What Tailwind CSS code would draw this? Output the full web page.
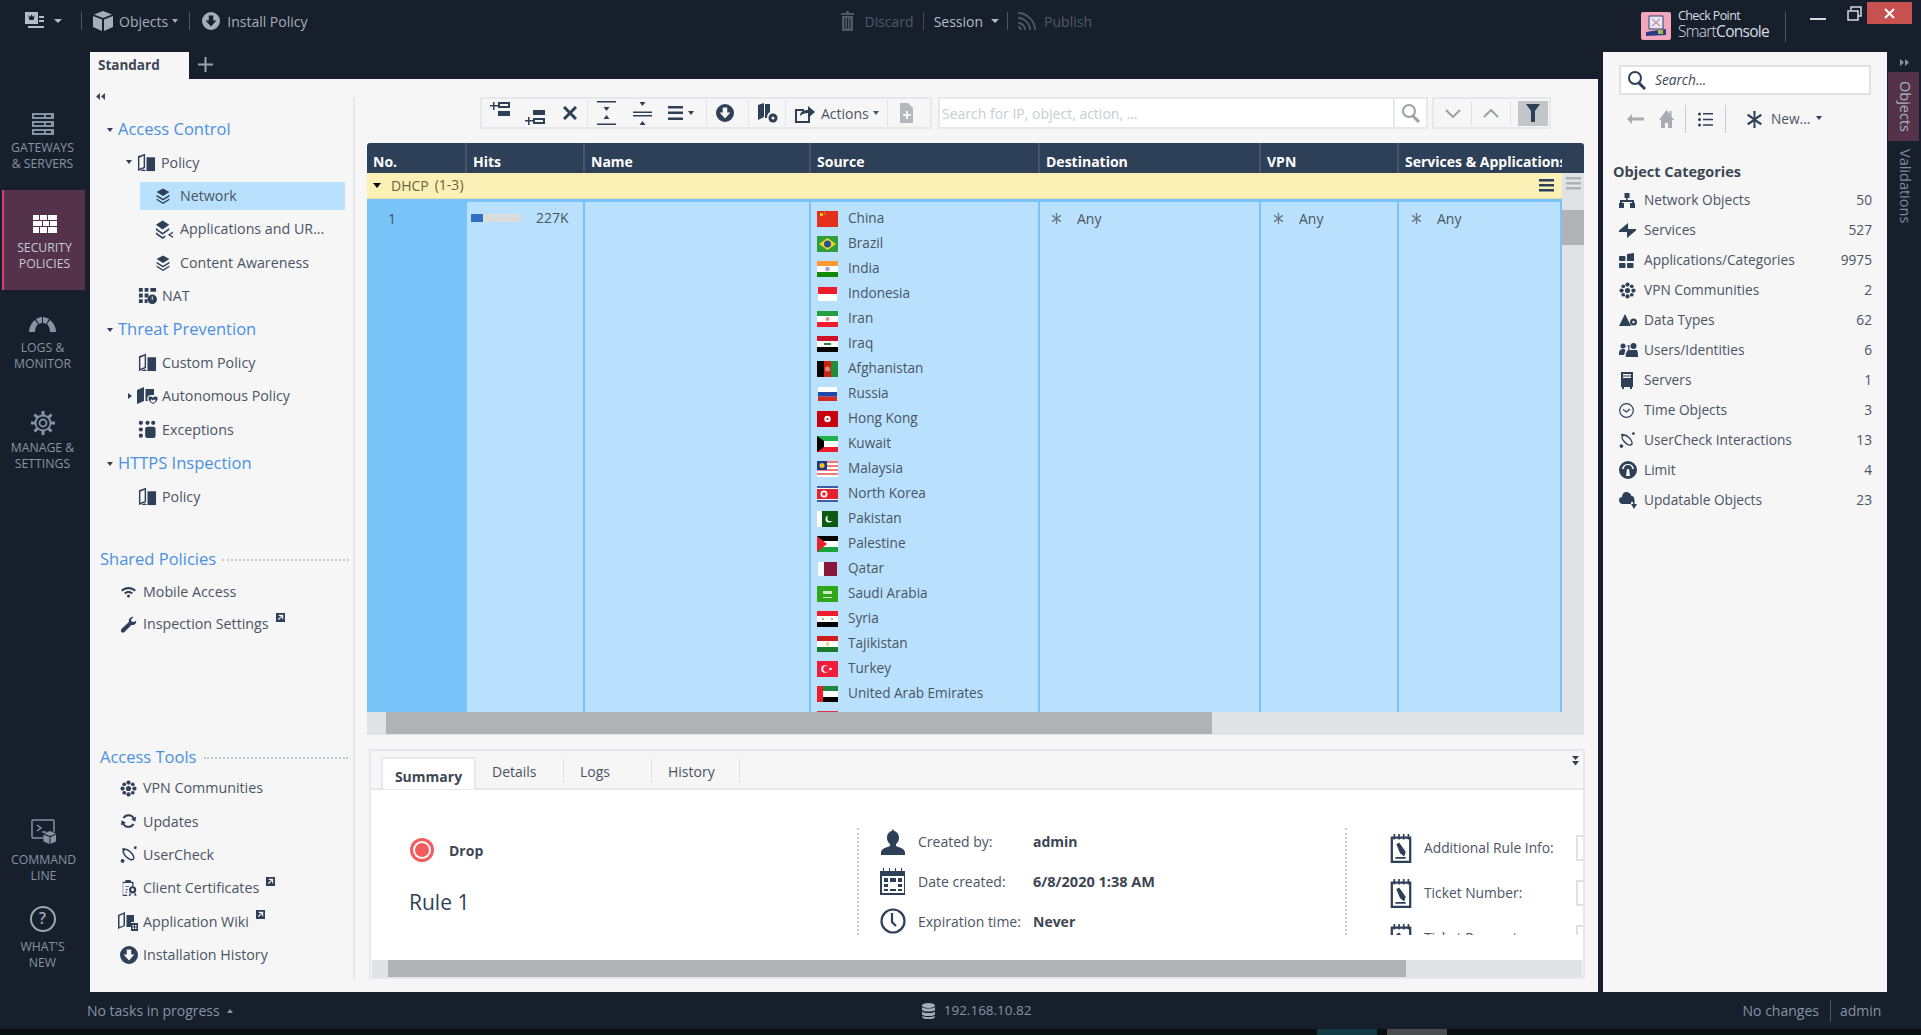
<!DOCTYPE html>
<html lang="en">
<head>
<meta charset="UTF-8">
<title>Check Point SmartConsole</title>
<script src="https://cdn.jsdelivr.net/npm/@tailwindcss/browser@4"></script>
</head>
<body class="w-[1921px] h-[1035px] overflow-hidden bg-[#171f2c] font-['Open_Sans',sans-serif] text-[14px] text-[#4a5463]">

<!-- icon set -->
<svg class="hidden">
  <symbol id="book" viewBox="0 0 20 20"><path d="M1 3.5 8.5.8v15L1 19zM2.500 5v11.500l4.500-1.800V3z" fill-rule="evenodd"/><path d="M10 4.500h9V19h-9z"/><path d="M7 17l3 2H3z"/></symbol>
  <symbol id="layers" viewBox="0 0 20 20"><path d="M10 .5l8 4.500-8 5-8-5z"/><path d="M2 8.500l8 5 8-5v2l-8 5-8-5z"/><path d="M2 13l8 5 8-5v2l-8 5-8-5z"/></symbol>
  <symbol id="layershare" viewBox="0 0 20 20"><path d="M8 .5l7 4.500-7 5-7-5z"/><path d="M1 8.500l7 5 7-5v2l-7 5-7-5z"/><path d="M1 13l7 5 3-2v2l-3 2-7-5z"/><path d="M19 12v1.600l-3 1.900 3 1.900V19l-5.500-3.500z"/></symbol>
  <symbol id="grid" viewBox="0 0 20 20"><path d="M1 2h4v4H1zM7 2h4v4H7zM13 2h6v4h-6zM1 8h4v4H1zM7 8h4v4H7zM1 14h4v4H1zM7 14h3v4H7z"/><circle cx="15" cy="14" r="5"/><path d="M14.500 11h1v3.500h-1z" fill="#f6f6f7"/></symbol>
  <symbol id="dots" viewBox="0 0 20 20"><circle cx="3" cy="3" r="2.200"/><circle cx="10" cy="3" r="2.200"/><circle cx="16" cy="3" r="2.200"/><circle cx="3" cy="10" r="2.200"/><circle cx="3" cy="16.500" r="2.200"/><rect x="7.500" y="7" width="11" height="12" rx="2.500"/></symbol>
  <symbol id="wifi" viewBox="0 0 20 20"><path d="M0 8c5.500-5.500 14.500-5.500 20 0l-2 2c-4.500-4-11.500-4-16 0z"/><path d="M4 11.500c3.500-3 8.500-3 12 0l-2 2c-2.500-2-5.500-2-8 0z"/><circle cx="10" cy="16" r="2"/></symbol>
  <symbol id="wrench" viewBox="0 0 20 20"><path d="M19 5.500c.6 3-2 6-5.500 5L5 19c-1 1-3 .6-3.600-.5S1 16 2 15l8.500-8C9.500 3.500 13 .5 16 1l-3 3 .5 2.500L16 7z"/></symbol>
  <symbol id="snow" viewBox="0 0 20 20"><circle cx="10" cy="10" r="3"/><circle cx="10" cy="3" r="2.500"/><circle cx="10" cy="17" r="2.500"/><circle cx="3" cy="10" r="2.500"/><circle cx="17" cy="10" r="2.500"/><circle cx="5" cy="5" r="2.200"/><circle cx="15" cy="5" r="2.200"/><circle cx="5" cy="15" r="2.200"/><circle cx="15" cy="15" r="2.200"/></symbol>
  <symbol id="refresh" viewBox="0 0 20 20"><path d="M10 2a8 8 0 0 1 7 4l2-1-1 6-5-3 2-1a5.500 5.500 0 0 0-9.500 0L3 6a8 8 0 0 1 7-4zM10 18a8 8 0 0 1-7-4l-2 1 1-6 5 3-2 1a5.500 5.500 0 0 0 9.500 0L17 14a8 8 0 0 1-7 4z"/></symbol>
  <symbol id="usercheck" viewBox="0 0 20 20"><ellipse cx="10" cy="10" rx="8" ry="3.800" transform="rotate(45 10 10)" fill="none" stroke="currentColor" stroke-width="1.800"/><path d="M2 3.500 4 2l3 2-1.500 1.500z"/><circle cx="18" cy="2" r="1.700"/><circle cx="3" cy="17.500" r="2.300"/></symbol>
  <symbol id="cert" viewBox="0 0 20 20"><path d="M3 3h3V1h6v2h3v5h-1.500V4.500h-10v13H8V19H3z"/><path d="M6 8h4v1H6zM6 11h3v1H6zM6 14h2v1H6z"/><circle cx="14" cy="12" r="4"/><circle cx="14" cy="12" r="1.600" fill="#f6f6f7"/><path d="M11 15l-1.500 4 3-1zM17 15l1.500 4-3-1z"/></symbol>
  <symbol id="bookgrid" viewBox="0 0 20 20"><path d="M0 4 7 1v14l-7 3zM1.500 5v11l4-1.500V3z" fill-rule="evenodd"/><path d="M8.500 4H16v7h-3v5H8.500z"/><path d="M13 12h7v8h-7z"/><path d="M14.500 14h1.500v1.500h-1.500zM17 14h1.500v1.500H17zM14.500 16.500h1.500V18h-1.500zM17 16.500h1.500V18H17z" fill="#f6f6f7"/></symbol>
  <symbol id="install" viewBox="0 0 20 20"><path fill-rule="evenodd" d="M10 0a10 10 0 1 0 0 20 10 10 0 0 0 0-20zM7.500 4h5v5.500H16L10 16 4 9.500h3.500z"/></symbol>
  <symbol id="ext" viewBox="0 0 10 10"><path fill-rule="evenodd" d="M0 0h10v10H0zM3 2v1.200h2.800L2.200 6.800l1 1L6.800 4.200V7H8V2z"/></symbol>
  <symbol id="star" viewBox="0 0 12 12"><path d="M5.200 0h1.600l-.2 4.500L10.400 2l.8 1.400-4 2.600 4 2.600-.8 1.400-3.800-2.500.2 4.500H5.200l.2-4.500L1.600 10 .8 8.600l4-2.600-4-2.600L1.600 2l3.800 2.500z"/></symbol>
  <symbol id="gridnote" viewBox="0 0 22 32"><path d="M1.200 5h19.600v25.800H1.200z" fill="none" stroke="currentColor" stroke-width="2.400"/><path d="M3 1h1.800v6H3zM8 1h1.800v6H8zM13 1h1.800v6H13zM18 1h1.800v6H18z"/><path d="M6 12l3-2 7 10-1.500 5-4.500-3.500zM5 25.500h11v2H5z"/></symbol>
</svg>

<!-- title bar -->
<header class="h-[52px] pb-[10px] flex items-center text-[14px] text-[#a4aeb9]">
  <div class="w-[81px] flex items-center">
    <svg class="ml-[24px] w-[21px] h-[20px] text-[#b4bdc7]" viewBox="0 0 21 20" fill="currentColor"><path fill-rule="evenodd" d="M1 1h13v12H1zM4 4l1.500 5h4L11 4 9 6 7.500 3.500 6 6z"/><path d="M15 5h5v2h-5zM15 9h5v2h-5zM4 15h16v2H4z"/></svg>
    <span class="ml-[9px] w-0 h-0 border-x-[4px] border-x-transparent border-t-[4px] border-t-[#b4bdc7]"></span>
  </div>
  <span class="w-px h-[18px] bg-[#4a5563]"></span>
  <svg class="ml-[11px] w-[20px] h-[20px] text-[#a4aeb9]" viewBox="0 0 20 20" fill="currentColor"><path d="M10 0l9 3.500-9 3.500L1 3.500z"/><path d="M0 5l9 3.500V20L0 16z"/><path d="M20 5l-9 3.500V20l9-4z"/></svg>
  <span class="ml-[6px]">Objects</span>
  <span class="ml-[4px] w-0 h-0 border-x-[3px] border-x-transparent border-t-[4px] border-t-[#a4aeb9]"></span>
  <span class="ml-[11px] w-px h-[18px] bg-[#4a5563]"></span>
  <svg class="ml-[12px] w-[18px] h-[18px] text-[#a4aeb9]" fill="currentColor"><use href="#install"/></svg>
  <span class="ml-[7px]">Install Policy</span>

  <div class="ml-[533px] flex items-center">
    <svg class="w-[13px] h-[20px] text-[#4f5966]" viewBox="0 0 13 20" fill="currentColor"><path d="M5 0h3v2h5v2H0V2h5zM1 5h11v15H1zM3.500 7v11h1V7zM6 7v11h1V7zM8.500 7v11h1V7z" fill-rule="evenodd"/></svg>
    <span class="ml-[11px] text-[#4f5966]">Discard</span>
    <span class="ml-[9px] w-px h-[18px] bg-[#3f4957]"></span>
    <span class="ml-[10px] text-[#b4bcc6]">Session</span>
    <span class="ml-[8px] w-0 h-0 border-x-[4px] border-x-transparent border-t-[4px] border-t-[#b4bcc6]"></span>
    <span class="ml-[8px] w-px h-[18px] bg-[#4a5563]"></span>
    <svg class="ml-[9px] w-[20px] h-[20px] text-[#4f5966]" viewBox="0 0 20 20" fill="none" stroke="currentColor" stroke-width="1.800"><path d="M1 2c9 0 17 8 17 17M1 7c6.500 0 12 5.500 12 12M1 12c4 0 7 3 7 7"/><path d="M1 16c1.500 0 3 1.500 3 3"/></svg>
    <span class="ml-[7px] text-[#4f5966]">Publish</span>
  </div>

  <div class="ml-[549px] mt-[10px] w-[30px] h-[28px] rounded-[2px] bg-[#f3a7bc] flex items-center justify-center">
    <svg class="w-[24px] h-[24px]" viewBox="0 0 24 24"><path d="M5 2h14v13H5z" fill="#e6e6f0" stroke="#33407a"/><path d="M8 5l8 7M16 5l-8 7" stroke="#c55a80"/><path d="M2 18l20-3v6l-20 1z" fill="#2c3a8c"/><path d="M14 16h5v4h-5z" fill="#a5c23c"/></svg>
  </div>
  <div class="ml-[7px] mt-[6px] w-[107px] flex flex-col text-[#d8dde3]">
    <span class="h-[14px] leading-[14px] text-[12.5px] tracking-[-0.6px]">Check Point</span>
    <span class="h-[16px] leading-[16px] text-[15.500px] tracking-[-0.7px]"><span class="font-light">Smart</span>Console</span>
  </div>
  <span class="mt-[12px] w-px h-[30px] bg-[#4a5563]"></span>
  <span class="ml-[24px] w-[16px] h-[2px] bg-[#d5dae0] mt-[-4px]"></span>
  <svg class="ml-[21px] w-[15px] h-[15px] mt-[-16px] text-[#d5dae0]" viewBox="0 0 15 15" fill="none" stroke="currentColor" stroke-width="1.500"><path d="M4 4V1h10v9h-3"/><path d="M1 5h10v9H1z"/></svg>
  <div class="ml-[5px] w-[45px] h-[22px] mt-[-16px] bg-[#c75050] flex items-center justify-center text-white">
    <svg class="w-[11px] h-[11px]" viewBox="0 0 11 11" stroke="currentColor" stroke-width="2"><path d="M1 1l9 9M10 1l-9 9"/></svg>
  </div>
</header>

<main class="h-[940px] flex">

  <!-- left rail -->
  <nav class="w-[90px] pt-[38px] pb-[3px] flex flex-col text-[12.250px] leading-[15.5px] text-[#8593a3] text-center">
    <div class="h-[100px] w-[83px] ml-[1px] pb-[19px] flex flex-col items-center justify-end">
      <svg class="w-[22px] h-[22px] mb-[5px]" viewBox="0 0 22 22" fill="currentColor"><path fill-rule="evenodd" d="M0 0h22v6H0zM2 2v2h10V2zM14 2v2h5V2zM0 8h22v6H0zM2 10v2h10v-2zM14 10v2h5v-2zM0 16h22v6H0zM2 18v2h10v-2zM14 18v2h5v-2z"/></svg>
      <span>GATEWAYS</span><span>&amp; SERVERS</span>
    </div>
    <div class="h-[100px] w-[83px] ml-[2px] pb-[19px] flex flex-col items-center justify-end bg-[#53324a] border-l-2 border-[#d0456f] text-[#c3cad3]">
      <svg class="w-[24px] h-[18px] mb-[7px]" viewBox="0 0 24 18" fill="#fff"><path d="M0 0h6v5H0zM7 0h7v5H7zM15 0h9v5h-9zM0 6h9v5H0zM10 6h6v5h-6zM17 6h7v5h-7zM0 12h6v6H0zM7 12h7v6H7zM15 12h9v6h-9z"/></svg>
      <span>SECURITY</span><span>POLICIES</span>
    </div>
    <div class="h-[100px] w-[83px] ml-[1px] pb-[19px] flex flex-col items-center justify-end">
      <svg class="w-[27px] h-[15px] mb-[8px]" viewBox="0 0 27 15" fill="currentColor"><path d="M0 15C0 11 2 6 6 3l3 4c-2 2-3 5-3 8zM7 2c2-1 4-2 6-2v6c-1 0-2 .5-3 1zM14 0c2 0 4 1 6 2l-3 5c-1-.5-2-1-3-1zM21 3c4 3 6 8 6 12h-6c0-3-1-6-3-8z"/></svg>
      <span>LOGS &amp;</span><span>MONITOR</span>
    </div>
    <div class="h-[100px] w-[83px] ml-[1px] pb-[19px] flex flex-col items-center justify-end">
      <svg class="w-[24px] h-[24px] mb-[5px]" viewBox="0 0 24 24" fill="none" stroke="currentColor" stroke-width="1.800"><circle cx="12" cy="12" r="7.500"/><circle cx="12" cy="12" r="3.500"/><path stroke-width="3" d="M12 0v4M12 20v4M0 12h4M20 12h4M3.500 3.500l3 3M17.500 17.500l3 3M3.500 20.500l3-3M17.500 6.500l3-3"/></svg>
      <span>MANAGE &amp;</span><span>SETTINGS</span>
    </div>
    <div class="mt-auto h-[87px] w-[83px] ml-[2px] pb-[19px] flex flex-col items-center justify-end">
      <svg class="w-[25px] h-[25px] mb-[8px]" viewBox="0 0 25 25" fill="none" stroke="currentColor" stroke-width="1.500"><path d="M13 19H2a1 1 0 0 1-1-1V2a1 1 0 0 1 1-1h20a1 1 0 0 1 1 1v11"/><path d="M6 6l4 3-4 3M11 13h4"/><path fill="currentColor" stroke="none" d="M19 12l6 2.500-6 2.500-6-2.500zM12.500 15.500l6 2.500v7l-6-2.500zM25 15.500L19.500 18v7l5.500-2.500z"/></svg>
      <span>COMMAND</span><span>LINE</span>
    </div>
    <div class="h-[87px] w-[83px] ml-[1px] pb-[19px] flex flex-col items-center justify-end">
      <div class="w-[26px] h-[26px] mb-[7px] rounded-full border-2 border-[#9aa6b3] flex items-center justify-center text-[16px] text-[#9aa6b3] font-semibold">?</div>
      <span>WHAT'S</span><span>NEW</span>
    </div>
  </nav>

  <!-- centre -->
  <div class="w-[1508px] flex flex-col">
    <div class="h-[27px] flex">
      <div class="w-[99px] bg-[#f6f6f7] pl-[8px] flex items-center font-bold text-[13.500px] text-[#3d4653]">Standard</div>
      <svg class="ml-[9px] mt-[5px] w-[15px] h-[15px] text-[#9aa4b0]" viewBox="0 0 15 15" fill="currentColor"><path d="M6.500 0h2v6.500H15v2H8.500V15h-2V8.500H0v-2h6.500z"/></svg>
    </div>
    <div class="h-[913px] bg-[#f6f6f7] flex">

      <!-- policy tree -->
      <aside class="w-[263px] flex flex-col text-[14.250px]">
        <div class="h-[33px] pl-[6px] flex items-center">
          <svg class="w-[9px] h-[7px] mt-[1px] text-[#3d4a5c]" viewBox="0 0 9 7" fill="currentColor"><path d="M4 0v7L0 3.500zM9 0v7L5 3.500z"/></svg>
        </div>
        <div class="mt-[0.300px] h-[33.400px] pl-[17px] flex items-center"><span class="w-0 h-0 border-x-[3.500px] border-x-transparent border-t-[4px] border-t-[#2e3f58] mt-[2px]"></span><span class="ml-[5px] text-[16.500px] text-[#4a90e2]">Access Control</span></div>
        <div class="h-[33.400px] pl-[36px] flex items-center"><span class="w-0 h-0 border-x-[3.500px] border-x-transparent border-t-[4px] border-t-[#2e3f58]"></span><svg class="ml-[5px] w-[19px] h-[19px] text-[#2e3f58]" fill="currentColor"><use href="#book"/></svg><span class="ml-[5px]">Policy</span></div>
        <div class="h-[33.400px] pl-[50px] flex items-center"><div class="w-[205px] h-[28px] bg-[#b9e1fd] pl-[15px] flex items-center"><svg class="w-[16px] h-[18px] text-[#2e3f58]" fill="currentColor"><use href="#layers"/></svg><span class="ml-[9px]">Network</span></div></div>
        <div class="h-[33.400px] pl-[65px] flex items-center"><svg class="w-[19px] h-[19px] text-[#2e3f58]" fill="currentColor"><use href="#layershare"/></svg><span class="ml-[6px]">Applications and UR...</span></div>
        <div class="h-[33.400px] pl-[65px] flex items-center"><svg class="w-[16px] h-[18px] text-[#2e3f58]" fill="currentColor"><use href="#layers"/></svg><span class="ml-[9px]">Content Awareness</span></div>
        <div class="h-[33.400px] pl-[48px] flex items-center"><svg class="w-[19px] h-[19px] text-[#2e3f58]" fill="currentColor"><use href="#grid"/></svg><span class="ml-[5px]">NAT</span></div>
        <div class="h-[33.400px] pl-[17px] flex items-center"><span class="w-0 h-0 border-x-[3.500px] border-x-transparent border-t-[4px] border-t-[#2e3f58] mt-[2px]"></span><span class="ml-[5px] text-[16.500px] text-[#4a90e2]">Threat Prevention</span></div>
        <div class="h-[33.400px] pl-[48px] flex items-center"><svg class="w-[19px] h-[19px] text-[#2e3f58]" fill="currentColor"><use href="#book"/></svg><span class="ml-[5px]">Custom Policy</span></div>
        <div class="h-[33.400px] pl-[38px] flex items-center"><span class="w-0 h-0 border-y-[3.500px] border-y-transparent border-l-[4px] border-l-[#2e3f58]"></span><svg class="ml-[5px] w-[21px] h-[19px] text-[#2e3f58]" fill="currentColor" viewBox="0 0 21 19"><path d="M0 3l7-3v14l-7 3z"/><path d="M8.500 2H17v6h-3c-3 0-5 3-3 6H8.500z"/><path d="M16 11c1-2 4-2 4.500 0s-1 4-4.500 6c-3.500-2-5-4-4.500-6S15 9 16 11zM16 13.500c-1-1.500-2.500-1-2.500 0s1 1.500 2.500 2.500c1.500-1 2.500-1.500 2.500-2.500s-1.500-1.500-2.500 0z" fill-rule="evenodd"/></svg><span class="ml-[4px]">Autonomous Policy</span></div>
        <div class="h-[33.400px] pl-[48px] flex items-center"><svg class="w-[19px] h-[19px] text-[#2e3f58]" fill="currentColor"><use href="#dots"/></svg><span class="ml-[5px]">Exceptions</span></div>
        <div class="h-[33.400px] pl-[17px] flex items-center"><span class="w-0 h-0 border-x-[3.500px] border-x-transparent border-t-[4px] border-t-[#2e3f58] mt-[2px]"></span><span class="ml-[5px] text-[16.500px] text-[#4a90e2]">HTTPS Inspection</span></div>
        <div class="h-[33.400px] pl-[48px] flex items-center"><svg class="w-[19px] h-[19px] text-[#2e3f58]" fill="currentColor"><use href="#book"/></svg><span class="ml-[5px]">Policy</span></div>

        <div class="mt-[30px] h-[33.400px] pl-[10px] pr-[4px] flex items-center"><span class="text-[16.500px] text-[#4a90e2]">Shared Policies</span><span class="ml-[6px] flex-1 border-t-2 border-dotted border-[#c3c9d0]"></span></div>
        <div class="h-[31px] pl-[29px] flex items-center"><svg class="w-[19px] h-[15px] text-[#2e3f58]" fill="currentColor"><use href="#wifi"/></svg><span class="ml-[5px]">Mobile Access</span></div>
        <div class="h-[33.400px] pl-[30px] flex items-center"><svg class="w-[17px] h-[17px] text-[#2e3f58]" fill="currentColor"><use href="#wrench"/></svg><span class="ml-[6px]">Inspection Settings</span><svg class="ml-[7px] mb-[14px] w-[9px] h-[9px] text-[#2e3f58]" fill="currentColor"><use href="#ext"/></svg></div>

        <div class="mt-[100.400px] h-[33.400px] pl-[10px] pr-[5px] flex items-center"><span class="text-[16.500px] text-[#4a90e2]">Access Tools</span><span class="ml-[7px] flex-1 border-t-2 border-dotted border-[#c3c9d0]"></span></div>
        <div class="h-[30px] pb-[3px] pl-[30px] flex items-center"><svg class="w-[17px] h-[17px] text-[#2e3f58]" fill="currentColor"><use href="#snow"/></svg><span class="ml-[6px]">VPN Communities</span></div>
        <div class="h-[33.400px] pl-[30px] flex items-center"><svg class="w-[17px] h-[18px] text-[#2e3f58]" fill="currentColor"><use href="#refresh"/></svg><span class="ml-[6px]">Updates</span></div>
        <div class="h-[33.400px] pl-[30px] flex items-center"><svg class="w-[17px] h-[17px] text-[#2e3f58]" fill="currentColor"><use href="#usercheck"/></svg><span class="ml-[6px]">UserCheck</span></div>
        <div class="h-[33.400px] pl-[30px] flex items-center"><svg class="w-[18px] h-[18px] text-[#2e3f58]" fill="currentColor"><use href="#cert"/></svg><span class="ml-[5px]">Client Certificates</span><svg class="ml-[7px] mb-[14px] w-[9px] h-[9px] text-[#2e3f58]" fill="currentColor"><use href="#ext"/></svg></div>
        <div class="h-[33.400px] pl-[28px] flex items-center"><svg class="w-[20px] h-[20px] text-[#2e3f58]" fill="currentColor"><use href="#bookgrid"/></svg><span class="ml-[5px]">Application Wiki</span><svg class="ml-[7px] mb-[14px] w-[9px] h-[9px] text-[#2e3f58]" fill="currentColor"><use href="#ext"/></svg></div>
        <div class="h-[33.400px] pl-[30px] flex items-center"><svg class="w-[18px] h-[18px] text-[#2e3f58]" fill="currentColor"><use href="#install"/></svg><span class="ml-[5px]">Installation History</span></div>
      </aside>
      <div class="w-[2px] h-[883px] mt-[18px] bg-[#e5e7ea]"></div>

      <!-- rulebase -->
      <section class="w-[1243px] pt-[18px] text-[14.5px]">
        <div class="h-[32px] ml-[125px] flex">
          <div class="w-[452px] border-2 border-[#e6e8ec] flex items-center text-[#2e3f58]">
            <div class="w-[35px] flex justify-center"><svg class="w-[20px] h-[16px] mt-[-8px]" viewBox="0 0 20 16" fill="currentColor"><path d="M0 4h3V1h1.500v3H8v1.500H4.500V9H3V5.500H0z"/><path fill-rule="evenodd" d="M8 1h12v6H8zM10 3v2h8V3z"/><path d="M8 10h12v5H8z"/></svg></div>
            <div class="w-[35px] flex justify-center"><svg class="w-[20px] h-[16px] mt-[8px]" viewBox="0 0 20 16" fill="currentColor"><path d="M8 1h12v5H8z"/><path fill-rule="evenodd" d="M8 9h12v6H8zM10 11v2h8v-2z"/><path d="M0 11h3V8h1.500v3H8v1.500H4.500V16H3v-3.500H0z"/></svg></div>
            <div class="w-[35px] flex justify-center"><svg class="w-[14px] h-[14px]" viewBox="0 0 14 14" stroke="currentColor" stroke-width="3"><path d="M1 1l12 12M13 1L1 13"/></svg></div>
            <span class="w-px h-[26px] bg-[#e1e3e6]"></span>
            <div class="w-[36px] flex justify-center"><svg class="w-[19px] h-[24px]" viewBox="0 0 19 24" fill="currentColor"><path d="M0 0h19v1.500H0zM0 22.500h19V24H0zM6.500 6h6l-3 4zM6.500 18h6l-3-4z"/></svg></div>
            <div class="w-[36px] flex justify-center"><svg class="w-[19px] h-[24px]" viewBox="0 0 19 24" fill="currentColor"><path d="M0 10.500h19V12H0zM0 14h19v1.500H0zM6.500 1h6l-3 4zM6.500 24h6l-3-4z"/></svg></div>
            <div class="w-[46px] pl-[8px] flex items-center"><svg class="w-[15px] h-[14px]" viewBox="0 0 15 14" fill="currentColor"><path d="M0 0h15v2.500H0zM0 5.500h15V8H0zM0 11.500h15V14H0z"/></svg><span class="ml-[5px] w-0 h-0 border-x-[3.500px] border-x-transparent border-t-[4px] border-t-[#2e3f58]"></span></div>
            <span class="w-px h-[26px] bg-[#e1e3e6]"></span>
            <div class="w-[41px] pl-[9px]"><svg class="w-[18px] h-[18px]" fill="currentColor"><use href="#install"/></svg></div>
            <span class="w-px h-[26px] bg-[#e1e3e6]"></span>
            <div class="w-[36px] pl-[9px]"><svg class="w-[20px] h-[20px]" viewBox="0 0 20 20" fill="currentColor"><path d="M0 2l6-2v14l-6 3z"/><path d="M7 1h5v8c-2 1-3 3-3 6H7z"/><circle cx="15" cy="15" r="4.500"/><circle cx="15" cy="15" r="1.500" fill="#f6f6f7"/></svg></div>
            <span class="w-px h-[26px] bg-[#e1e3e6]"></span>
            <div class="w-[101px] pl-[9px] flex items-center text-[#4a5463]"><svg class="w-[20px] h-[19px] text-[#2e3f58]" viewBox="0 0 20 19" fill="currentColor"><path d="M0 5h9v2H2v10h11v-6h2v8H0z"/><path d="M5 12c0-4 3-6 8-6V2l7 6-7 6V9c-3 0-6 1-8 3z"/></svg><span class="ml-[6px] text-[14px]">Actions</span><span class="ml-[4px] w-0 h-0 border-x-[3px] border-x-transparent border-t-[4px] border-t-[#4a5463]"></span></div>
            <span class="w-px h-[26px] bg-[#e1e3e6]"></span>
            <div class="flex-1 pl-[12px]"><svg class="w-[13px] h-[20px] text-[#b4b8bd]" viewBox="0 0 13 20" fill="currentColor"><path d="M0 0h8l5 5v15H0zM6 8v3H3v2h3v3h2v-3h3v-2H8V8z" fill-rule="evenodd"/></svg></div>
          </div>
          <div class="ml-[6px] w-[490px] border-2 border-[#e6e8ec] bg-white flex">
            <span class="w-[455px] pl-[2px] flex items-center text-[14px] text-[#c8ccd1] border-r-2 border-[#e6e8ec]">Search for IP, object, action, ...</span>
            <div class="flex-1 flex items-center justify-center"><svg class="w-[19px] h-[20px] text-[#9aa0a7]" viewBox="0 0 19 20" fill="none" stroke="currentColor" stroke-width="2"><circle cx="8" cy="8" r="6"/><path stroke-width="3" d="M12 13l6 6"/></svg></div>
          </div>
          <div class="ml-[4px] w-[119px] border-2 border-[#e6e8ec] flex items-center">
            <div class="w-[37px] flex justify-center"><svg class="w-[16px] h-[9px] text-[#9aa0a7]" viewBox="0 0 16 9" fill="none" stroke="currentColor" stroke-width="2"><path d="M1 1l7 7 7-7"/></svg></div>
            <span class="w-px h-[24px] bg-[#dfe1e4]"></span>
            <div class="w-[38px] flex justify-center"><svg class="w-[16px] h-[9px] text-[#9aa0a7]" viewBox="0 0 16 9" fill="none" stroke="currentColor" stroke-width="2"><path d="M1 8l7-7 7 7"/></svg></div>
            <span class="w-px h-[24px] bg-[#dfe1e4]"></span>
            <div class="ml-[7px] w-[30px] h-[25px] bg-[#c3c6c9] flex items-center justify-center"><svg class="w-[14px] h-[18px] text-[#2e3f58]" viewBox="0 0 14 18" fill="currentColor"><path d="M0 0h14l-5 7v11H5V7z"/></svg></div>
          </div>
        </div>

        <div class="ml-[12px] mt-[14px] w-[1217px]">
          <div class="h-[30px] grid grid-cols-[100px_118px_226px_229px_221px_138px_163px_22px] bg-[#2e3f58] rounded-t-[3px] text-white font-bold text-[14px]">
            <div class="pl-[6px] pt-[9px] leading-[20px] border-r-2 border-[#45566e]">No.</div>
            <div class="pl-[6px] pt-[9px] leading-[20px] border-r-2 border-[#45566e]">Hits</div>
            <div class="pl-[6px] pt-[9px] leading-[20px] border-r-2 border-[#45566e]">Name</div>
            <div class="pl-[6px] pt-[9px] leading-[20px] border-r-2 border-[#45566e]">Source</div>
            <div class="pl-[6px] pt-[9px] leading-[20px] border-r-2 border-[#45566e]">Destination</div>
            <div class="pl-[6px] pt-[9px] leading-[20px] border-r-2 border-[#45566e]">VPN</div>
            <div class="pl-[6px] pt-[9px] leading-[20px] overflow-hidden whitespace-nowrap">Services &amp; Applications</div>
            <div></div>
          </div>
          <div class="h-[539px] flex">
            <div class="w-[1195px] flex flex-col">
              <div class="h-[26px] bg-[#fbf0b5] pl-[6px] flex items-center text-[14px] text-[#6b6340] border-b border-[#e8dea4]">
                <span class="w-0 h-0 border-x-[4.500px] border-x-transparent border-t-[5px] border-t-black"></span>
                <span class="ml-[10px]">DHCP</span><span class="ml-[6px] mt-[-2px]">(1-3)</span>
                <svg class="ml-auto mr-[8px] w-[15px] h-[13px] text-[#2e3f58]" viewBox="0 0 15 13" fill="currentColor"><path d="M0 0h15v2.500H0zM0 5h15v2.500H0zM0 10h15v2.500H0z"/></svg>
              </div>
              <div class="h-[3px] bg-[#78c3f7]"></div>
              <div class="h-[510px] grid grid-cols-[100px_118px_226px_229px_221px_138px_163px] overflow-hidden text-[14px]">
                <div class="bg-[#78c3f7] pl-[21px] pt-[7px] leading-[20px]">1</div>
                <div class="bg-[#b9e1fd] border-r-2 border-[#78c3f7] pl-[4px] pt-[6px] flex items-start">
                  <span class="mt-[6px] flex w-[50px] h-[8px] bg-[#dcdcdc]"><span class="w-[12px] bg-[#2f6fc4]"></span></span>
                  <span class="ml-[15px] leading-[20px]">227K</span>
                </div>
                <div class="bg-[#b9e1fd] border-r-2 border-[#78c3f7]"></div>
                <ul class="bg-[#b9e1fd] border-r-2 border-[#78c3f7] pl-[6px] pt-[4px] h-[510px] overflow-hidden text-[13.600px]">
                  <li class="h-[25px] flex items-center"><svg class="w-[21px] h-[16px]" viewBox="0 0 21 16"><path fill="#e3301a" d="M0 0h21v16H0z"/><path fill="#f5c518" d="M3 2h3v3H3zM7 1h1v1H7zM8 3h1v1H8z"/></svg><span class="ml-[10px]">China</span></li>
                  <li class="h-[25px] flex items-center"><svg class="w-[21px] h-[16px]" viewBox="0 0 21 16"><path fill="#2f9e3c" d="M0 0h21v16H0z"/><path fill="#f0d81f" d="M10.500 2 19 8l-8.500 6L2 8z"/><circle cx="10.500" cy="8" r="3.500" fill="#2b4f9e"/></svg><span class="ml-[10px]">Brazil</span></li>
                  <li class="h-[25px] flex items-center"><svg class="w-[21px] h-[16px]" viewBox="0 0 21 16"><path fill="#ff9a33" d="M0 0h21v5H0z"/><path fill="#fff" d="M0 5h21v6H0z"/><path fill="#138808" d="M0 11h21v5H0z"/><circle cx="10.500" cy="8" r="2.200" fill="#9aa3d0"/></svg><span class="ml-[10px]">India</span></li>
                  <li class="h-[25px] flex items-center"><svg class="w-[21px] h-[16px]" viewBox="0 0 21 16"><path fill="#f01c2e" d="M1 1h19v7H1z"/><path fill="#fff" d="M1 8h19v7H1z"/></svg><span class="ml-[10px]">Indonesia</span></li>
                  <li class="h-[25px] flex items-center"><svg class="w-[21px] h-[16px]" viewBox="0 0 21 16"><path fill="#239f40" d="M0 0h21v5H0z"/><path fill="#fff" d="M0 5h21v6H0z"/><path fill="#f01c2e" d="M0 11h21v5H0z"/><circle cx="10.500" cy="8" r="2" fill="#e98a94"/></svg><span class="ml-[10px]">Iran</span></li>
                  <li class="h-[25px] flex items-center"><svg class="w-[21px] h-[16px]" viewBox="0 0 21 16"><path fill="#ce1126" d="M0 0h21v5H0z"/><path fill="#fff" d="M0 5h21v6H0z"/><path d="M0 11h21v5H0z"/><path fill="#2a8a3a" d="M7 7h7v2H7z"/></svg><span class="ml-[10px]">Iraq</span></li>
                  <li class="h-[25px] flex items-center"><svg class="w-[21px] h-[16px]" viewBox="0 0 21 16"><path d="M0 0h7v16H0z"/><path fill="#d32011" d="M7 0h7v16H7z"/><path fill="#1f8f3a" d="M14 0h7v16h-7z"/><circle cx="10.500" cy="8" r="2.500" fill="#e08a7e"/></svg><span class="ml-[10px]">Afghanistan</span></li>
                  <li class="h-[25px] flex items-center"><svg class="w-[21px] h-[16px]" viewBox="0 0 21 16"><path fill="#fff" d="M1 1h19v5H1z"/><path fill="#1f47a8" d="M1 6h19v4.500H1z"/><path fill="#d52b1e" d="M1 10.500h19V15H1z"/></svg><span class="ml-[10px]">Russia</span></li>
                  <li class="h-[25px] flex items-center"><svg class="w-[21px] h-[16px]" viewBox="0 0 21 16"><path fill="#c8010f" d="M0 0h21v16H0z"/><circle cx="10.500" cy="8" r="3.200" fill="#fff"/><circle cx="10.500" cy="8" r="1" fill="#c8010f"/></svg><span class="ml-[10px]">Hong Kong</span></li>
                  <li class="h-[25px] flex items-center"><svg class="w-[21px] h-[16px]" viewBox="0 0 21 16"><path fill="#1fb24a" d="M0 0h21v5H0z"/><path fill="#fff" d="M0 5h21v6H0z"/><path fill="#f01c2e" d="M0 11h21v5H0z"/><path d="M0 0l7 5v6l-7 5z"/></svg><span class="ml-[10px]">Kuwait</span></li>
                  <li class="h-[25px] flex items-center"><svg class="w-[21px] h-[16px]" viewBox="0 0 21 16"><path fill="#fff" d="M0 0h21v16H0z"/><path fill="#f07a7a" d="M0 0h21v2H0zM0 4h21v2H0zM0 8h21v2H0zM0 12h21v2H0z"/><path fill="#1c3a8e" d="M0 0h10v9H0z"/><circle cx="5" cy="4.500" r="2.500" fill="#f5c518"/></svg><span class="ml-[10px]">Malaysia</span></li>
                  <li class="h-[25px] flex items-center"><svg class="w-[21px] h-[16px]" viewBox="0 0 21 16"><path fill="#3e5da8" d="M0 0h21v16H0z"/><path fill="#fff" d="M0 2h21v12H0z"/><path fill="#e3222c" d="M0 3h21v10H0z"/><circle cx="7" cy="8" r="3.500" fill="#fff"/><circle cx="7" cy="8" r="1.800" fill="#e3222c"/></svg><span class="ml-[10px]">North Korea</span></li>
                  <li class="h-[25px] flex items-center"><svg class="w-[21px] h-[16px]" viewBox="0 0 21 16"><path fill="#fff" d="M0 0h5v16H0z"/><path fill="#0c5a12" d="M5 0h16v16H5z"/><circle cx="12" cy="8" r="3.500" fill="#fff"/><circle cx="13.500" cy="7" r="3.200" fill="#0c5a12"/></svg><span class="ml-[10px]">Pakistan</span></li>
                  <li class="h-[25px] flex items-center"><svg class="w-[21px] h-[16px]" viewBox="0 0 21 16"><path d="M0 0h21v5H0z"/><path fill="#fff" d="M0 5h21v6H0z"/><path fill="#1aa33a" d="M0 11h21v5H0z"/><path fill="#e8202e" d="M0 0l10 8-10 8z"/></svg><span class="ml-[10px]">Palestine</span></li>
                  <li class="h-[25px] flex items-center"><svg class="w-[21px] h-[16px]" viewBox="0 0 21 16"><path fill="#fff" d="M1 1h6v14H1z"/><path fill="#8a1538" d="M7 1h13v14H7z"/></svg><span class="ml-[10px]">Qatar</span></li>
                  <li class="h-[25px] flex items-center"><svg class="w-[21px] h-[16px]" viewBox="0 0 21 16"><path fill="#2ea81a" d="M0 0h21v16H0z"/><path fill="#cfe9c4" d="M6 5h9v3H6zM6 11h9v1H6z"/></svg><span class="ml-[10px]">Saudi Arabia</span></li>
                  <li class="h-[25px] flex items-center"><svg class="w-[21px] h-[16px]" viewBox="0 0 21 16"><path fill="#f01c2e" d="M0 0h21v5H0z"/><path fill="#fff" d="M0 5h21v6H0z"/><path d="M0 11h21v5H0z"/><path fill="#7fd07f" d="M5 7h2v2H5zM14 7h2v2h-2z"/></svg><span class="ml-[10px]">Syria</span></li>
                  <li class="h-[25px] flex items-center"><svg class="w-[21px] h-[16px]" viewBox="0 0 21 16"><path fill="#d11a1a" d="M0 0h21v5H0z"/><path fill="#fff" d="M0 5h21v6H0z"/><path fill="#1a7a2e" d="M0 11h21v5H0z"/><path fill="#e8d68a" d="M9 6h3v4H9z"/></svg><span class="ml-[10px]">Tajikistan</span></li>
                  <li class="h-[25px] flex items-center"><svg class="w-[21px] h-[16px]" viewBox="0 0 21 16"><path fill="#f01c3c" d="M0 0h21v16H0z"/><circle cx="8" cy="8" r="3.800" fill="#fff"/><circle cx="9.200" cy="8" r="3" fill="#f01c3c"/><circle cx="13.500" cy="8" r="1.300" fill="#fff"/></svg><span class="ml-[10px]">Turkey</span></li>
                  <li class="h-[25px] flex items-center"><svg class="w-[21px] h-[16px]" viewBox="0 0 21 16"><path fill="#f01c2e" d="M0 0h6v16H0z"/><path fill="#1a8a3a" d="M6 0h15v5H6z"/><path fill="#fff" d="M6 5h15v6H6z"/><path d="M6 11h15v5H6z"/></svg><span class="ml-[10px]">United Arab Emirates</span></li>
                  <li class="h-[25px] flex items-center"><svg class="w-[21px] h-[16px]" viewBox="0 0 21 16"><path fill="#e3304a" d="M0 0h21v16H0z"/></svg></li>
                </ul>
                <div class="bg-[#b9e1fd] border-r-2 border-[#78c3f7] pl-[11px] pt-[7px] flex items-start leading-[20px]"><svg class="w-[11px] h-[11px] mt-[4px] text-[#6f7782]" fill="currentColor"><use href="#star"/></svg><span class="ml-[15px]">Any</span></div>
                <div class="bg-[#b9e1fd] border-r-2 border-[#78c3f7] pl-[12px] pt-[7px] flex items-start leading-[20px]"><svg class="w-[11px] h-[11px] mt-[4px] text-[#6f7782]" fill="currentColor"><use href="#star"/></svg><span class="ml-[15px]">Any</span></div>
                <div class="bg-[#b9e1fd] border-r-2 border-[#78c3f7] pl-[12px] pt-[7px] flex items-start leading-[20px]"><svg class="w-[11px] h-[11px] mt-[4px] text-[#6f7782]" fill="currentColor"><use href="#star"/></svg><span class="ml-[15px]">Any</span></div>
              </div>
            </div>
            <div class="w-[22px] bg-[#e0e2e6] flex flex-col items-center">
              <svg class="mt-[4px] w-[15px] h-[13px] text-[#b0b3b5]" viewBox="0 0 15 13" fill="currentColor"><path d="M0 0h15v2.500H0zM0 5h15v2.500H0zM0 10h15v2.500H0z"/></svg>
              <div class="mt-[20px] w-[22px] h-[35px] bg-[#b0b3b5]"></div>
            </div>
          </div>
          <div class="h-[23px] bg-[#e0e2e6] pl-[19px]"><div class="w-[826px] h-[22px] bg-[#b0b3b5]"></div></div>
        </div>

        <!-- rule details -->
        <div class="ml-[14px] mt-[14px] w-[1216px] h-[230px] border-2 border-[#e6e8ec] flex flex-col">
          <div class="h-[39px] border-b-2 border-[#e6e8ec] flex text-[14px]">
            <div class="ml-[10px] mt-[6px] w-[95px] h-[32px] bg-white border-x-2 border-t-2 border-[#e6e8ec] flex items-center justify-center font-bold text-[#3d4653] pt-[4px]">Summary</div>
            <div class="w-[88px] pl-[16px] mt-[8px] h-[24px] flex items-center border-r border-[#dfe1e4]">Details</div>
            <div class="w-[88px] pl-[16px] mt-[8px] h-[24px] flex items-center border-r border-[#dfe1e4]">Logs</div>
            <div class="w-[88px] pl-[16px] mt-[8px] h-[24px] flex items-center border-r border-[#dfe1e4]">History</div>
            <svg class="ml-auto mr-[4px] mt-[5px] w-[7px] h-[10px] text-[#2e3f58]" viewBox="0 0 7 10" fill="currentColor"><path d="M0 0h7L3.500 4zM0 5h7L3.500 9.500z"/></svg>
          </div>
          <div class="h-[170px] bg-white pt-[38px] flex text-[14px]">
            <div class="w-[488px] h-[107px] border-r-2 border-dotted border-[#c3c9d0] pl-[38px]">
              <div class="h-[44px] flex items-center">
                <svg class="w-[26px] h-[26px]" viewBox="0 0 26 26"><circle cx="13" cy="13" r="12" fill="#f25c5c"/><circle cx="13" cy="13" r="9" fill="#fff"/><circle cx="13" cy="13" r="7" fill="#f25c5c"/></svg>
                <span class="ml-[14px] font-bold text-[#3d4653]">Drop</span>
              </div>
              <p class="mt-[16px] text-[21px] leading-[28px] text-[#2e3f58]">Rule 1</p>
            </div>
            <div class="w-[488px] h-[107px] border-r-2 border-dotted border-[#c3c9d0] pl-[21px] flex flex-col gap-[12px] text-[14px]">
              <div class="h-[28px] flex items-center">
                <svg class="w-[26px] h-[26px] text-[#2e3f58]" viewBox="0 0 26 26" fill="currentColor"><path d="M13 0c-1 1-1 1-1 2-3 .5-5 3-5 7 0 3 1.500 5 3 6v2c-3 1.500-8 2-9 6v3h24v-3c-1-4-6-4.500-9-6v-2c1.500-1 3-3 3-6 0-4-2-6.500-5-7z"/></svg>
                <span class="ml-[12px] w-[115px]">Created by:</span><b class="font-bold text-[#3d4653]">admin</b>
              </div>
              <div class="h-[28px] flex items-center">
                <svg class="w-[26px] h-[27px] text-[#2e3f58]" viewBox="0 0 26 27" fill="currentColor"><path fill-rule="evenodd" d="M0 3h3V0h1v3h5V0h1v3h5V0h1v3h5V0h1v3h3v24H0zM2 8v17h22V8zM4 10h4v4H4zM10 10h6v4h-6zM18 10h4v4h-4zM4 16h4v3H4zM18 16h4v3h-4zM4 21h4v2H4zM10 21h6v2h-6zM18 21h4v2h-4z"/></svg>
                <span class="ml-[12px] w-[115px]">Date created:</span><b class="font-bold text-[14.500px] text-[#3d4653]">6/8/2020 1:38 AM</b>
              </div>
              <div class="h-[28px] flex items-center">
                <svg class="w-[26px] h-[26px] text-[#2e3f58]" viewBox="0 0 26 26" fill="none" stroke="currentColor" stroke-width="2.200"><circle cx="13" cy="13" r="11.500"/><path d="M12 5v9l4 4"/></svg>
                <span class="ml-[12px] w-[115px]">Expiration time:</span><b class="font-bold text-[#3d4653]">Never</b>
              </div>
            </div>
            <div class="flex-1 h-[107px] overflow-hidden pl-[43px] pt-[5px] flex flex-col gap-[15px]">
              <div class="h-[30px] shrink-0 flex items-center"><svg class="w-[22px] h-[30px] text-[#2e3f58]" fill="currentColor"><use href="#gridnote"/></svg><span class="ml-[12px] w-[152px] text-[13.800px]">Additional Rule Info:</span><span class="w-[7px] h-[26px] border-y-2 border-l-2 border-[#dfe1e4]"></span></div>
              <div class="h-[30px] shrink-0 flex items-center"><svg class="w-[22px] h-[30px] text-[#2e3f58]" fill="currentColor"><use href="#gridnote"/></svg><span class="ml-[12px] w-[152px] text-[13.800px]">Ticket Number:</span><span class="w-[7px] h-[26px] border-y-2 border-l-2 border-[#dfe1e4]"></span></div>
              <div class="h-[30px] shrink-0 flex items-center"><svg class="w-[22px] h-[30px] text-[#2e3f58]" fill="currentColor"><use href="#gridnote"/></svg><span class="ml-[12px] w-[152px] text-[13.800px]">Ticket Requester:</span><span class="w-[7px] h-[26px] border-y-2 border-l-2 border-[#dfe1e4]"></span></div>
            </div>
          </div>
          <div class="h-[17px] bg-[#e0e2e6] mx-[1px] pl-[16px]"><div class="w-[1018px] h-[17px] bg-[#b0b3b5]"></div></div>
        </div>
      </section>
    </div>
  </div>

  <!-- objects panel -->
  <aside class="ml-[5px] w-[284px] bg-[#f6f6f7] text-[13.700px]">
    <div class="ml-[16px] mt-[13px] w-[252px] h-[30px] border-2 border-[#dfe1e4] bg-white flex items-center pl-[6px]">
      <svg class="w-[19px] h-[20px] text-[#2e3f58]" viewBox="0 0 19 20" fill="none" stroke="currentColor" stroke-width="2"><circle cx="8" cy="8" r="6"/><path stroke-width="3" d="M12 13l6 6"/></svg>
      <span class="ml-[9px] italic text-[#3d4653]">Search...</span>
    </div>
    <div class="mt-[10px] h-[28px] ml-[24px] flex items-center">
      <svg class="w-[17px] h-[10px] text-[#a8adb3]" viewBox="0 0 17 10" fill="currentColor"><path d="M5 0v3.500h12v3H5V10L0 5z"/></svg>
      <svg class="ml-[15px] w-[15px] h-[18px] text-[#a8adb3]" viewBox="0 0 15 18" fill="currentColor"><path d="M7.500 0l3 4V1h2v5.500l2.500 3.500H13v8H9v-5H6v5H2v-8H0z"/></svg>
      <span class="ml-[11px] w-px h-[28px] bg-[#c8ccd1]"></span>
      <svg class="ml-[12px] w-[15px] h-[15px] text-[#2e3f58]" viewBox="0 0 15 15" fill="currentColor"><circle cx="1.500" cy="2" r="1.500"/><circle cx="1.500" cy="7.500" r="1.500"/><circle cx="1.500" cy="13" r="1.500"/><path d="M5 1h10v1.500H5zM5 6.800h10v1.500H5zM5 12.300h10v1.500H5z"/></svg>
      <span class="ml-[12px] w-px h-[28px] bg-[#c8ccd1]"></span>
      <svg class="ml-[20px] w-[17px] h-[17px] text-[#2e3f58]" viewBox="0 0 12 12" fill="currentColor"><use href="#star"/></svg>
      <span class="ml-[8px]">New...</span>
      <span class="ml-[6px] mb-[2px] w-0 h-0 border-x-[3.500px] border-x-transparent border-t-[4px] border-t-[#2e3f58]"></span>
    </div>
    <h3 class="mt-[29px] ml-[10px] h-[20px] leading-[20px] font-bold text-[14.500px] text-[#3d4653]">Object Categories</h3>
    <ul class="mt-[3px] pl-[16px] pr-[15px]">
      <li class="h-[30px] flex items-center"><span class="w-[25px]"><svg class="w-[16px] h-[15px] text-[#2e3f58]" viewBox="0 0 16 15" fill="currentColor"><path d="M5.500 0h5v5h-2v2H15v3h1v5h-5v-5h2V9H3v1h2v5H0v-5h1V7h6V5H5.500z"/></svg></span><span class="flex-1">Network Objects</span><span>50</span></li>
      <li class="h-[30px] flex items-center"><span class="w-[25px]"><svg class="w-[17px] h-[15px] text-[#2e3f58]" viewBox="0 0 17 15" fill="currentColor"><path d="M9 0v6h8v1.500H0L9 0zM8 15V9H0V7.500h17L8 15z"/></svg></span><span class="flex-1">Services</span><span>527</span></li>
      <li class="h-[30px] flex items-center"><span class="w-[25px]"><svg class="w-[16px] h-[15px] text-[#2e3f58]" viewBox="0 0 16 15" fill="currentColor"><rect y="3" width="6.500" height="5" rx="1"/><rect y="10" width="6.500" height="5" rx="1"/><rect x="8" y="10" width="6.500" height="5" rx="1"/><path d="M8 1l7-1v8H8z"/></svg></span><span class="flex-1">Applications/Categories</span><span>9975</span></li>
      <li class="h-[30px] flex items-center"><span class="w-[25px]"><svg class="w-[17px] h-[17px] text-[#2e3f58]" fill="currentColor"><use href="#snow"/></svg></span><span class="flex-1">VPN Communities</span><span>2</span></li>
      <li class="h-[30px] flex items-center"><span class="w-[25px]"><svg class="w-[18px] h-[12px] text-[#2e3f58]" viewBox="0 0 18 12" fill="currentColor"><path d="M6 0l6 12H0z"/><circle cx="14.500" cy="8" r="3.500"/><circle cx="14.500" cy="8" r="1.200" fill="#f6f6f7"/></svg></span><span class="flex-1">Data Types</span><span>62</span></li>
      <li class="h-[30px] flex items-center"><span class="w-[25px]"><svg class="w-[19px] h-[14px] text-[#2e3f58]" viewBox="0 0 19 14" fill="currentColor"><circle cx="4" cy="3" r="2.500"/><circle cx="14.500" cy="3" r="3"/><path d="M0 10c0-3 2-4 4-4 1 0 2 .5 2.500 1L5 12H0zM7 14c0-4 2-7 4-7h7c1 2 1 5 1 7zM6 14l1-3h-.5L9.500 6 9 3.500 7 3l3.500-1v4.500z"/></svg></span><span class="flex-1">Users/Identities</span><span>6</span></li>
      <li class="h-[30px] flex items-center"><span class="w-[25px]"><svg class="w-[12px] h-[17px] text-[#2e3f58] ml-[2px]" viewBox="0 0 12 17" fill="currentColor"><path fill-rule="evenodd" d="M0 0h12v15h-1v2H9v-2H3v2H1v-2H0zM2 2v1.500h8V2zM2 4.500V6h8V4.500z"/></svg></span><span class="flex-1">Servers</span><span>1</span></li>
      <li class="h-[30px] flex items-center"><span class="w-[25px]"><svg class="w-[15px] h-[15px] text-[#2e3f58]" viewBox="0 0 15 15" fill="none" stroke="currentColor" stroke-width="1.200"><circle cx="7.500" cy="7.500" r="6.800"/><path d="M4 6.500l3.500 2.500 3.500-3"/></svg></span><span class="flex-1">Time Objects</span><span>3</span></li>
      <li class="h-[30px] flex items-center"><span class="w-[25px]"><svg class="w-[16px] h-[16px] text-[#2e3f58]" fill="currentColor"><use href="#usercheck"/></svg></span><span class="flex-1">UserCheck Interactions</span><span>13</span></li>
      <li class="h-[30px] flex items-center"><span class="w-[25px]"><svg class="w-[18px] h-[18px] text-[#2e3f58]" viewBox="0 0 18 18" fill="currentColor"><path fill-rule="evenodd" d="M9 0a9 9 0 1 0 0 18A9 9 0 0 0 9 0zM9 3a6 6 0 0 1 6 5h-2a4 4 0 0 0-8 0H3a6 6 0 0 1 6-5zM8 8h2l1 7H7z"/></svg></span><span class="flex-1">Limit</span><span>4</span></li>
      <li class="h-[30px] flex items-center"><span class="w-[25px]"><svg class="w-[19px] h-[17px] text-[#2e3f58]" viewBox="0 0 19 17" fill="currentColor"><path d="M7 0c3 0 5 2 5.500 4 .8 0 2 .5 2.500 1.500V10h-3v2H2.500C1 11 0 9.500 0 8c0-2 1.500-3 3-3 0-3 2-5 4-5zM14 7h1.500v5H18l-3 5-3-5h2z"/></svg></span><span class="flex-1">Updatable Objects</span><span>23</span></li>
    </ul>
  </aside>

  <!-- side tabs -->
  <div class="w-[34px] pt-[7px] text-[14.500px] text-[#7d8a99]">
    <svg class="ml-[13px] w-[9px] h-[7px] text-[#8593a3]" viewBox="0 0 9 7" fill="currentColor"><path d="M0 0v7l4-3.500zM5 0v7l4-3.500z"/></svg>
    <div class="ml-[1px] mt-[6px] w-[31px] h-[69px] bg-[#53324a] pl-[3px] flex items-center justify-center text-[#a9b3bf] [writing-mode:vertical-rl]">Objects</div>
    <div class="ml-[1px] mt-[7px] w-[31px] h-[76px] pl-[3px] flex items-center justify-center [writing-mode:vertical-rl]">Validations</div>
  </div>
</main>

<!-- status bar -->
<footer class="h-[37px] flex items-center text-[14px] text-[#8593a3]">
  <span class="ml-[87px]">No tasks in progress</span>
  <span class="ml-[7px] w-0 h-0 border-x-[3.500px] border-x-transparent border-b-[4px] border-b-[#8593a3]"></span>
  <svg class="ml-[689px] w-[13px] h-[16px] text-[#a4aeb9]" viewBox="0 0 13 16" fill="currentColor"><ellipse cx="6.500" cy="2.500" rx="6.500" ry="2.500"/><path d="M0 4c2 2 11 2 13 0v3c-2 2-11 2-13 0zM0 8.500c2 2 11 2 13 0v3c-2 2-11 2-13 0zM0 13c2 1.500 11 1.500 13 0v.5c0 3.500-13 3.500-13 0z"/></svg>
  <span class="ml-[9px] text-[13.500px]">192.168.10.82</span>
  <span class="ml-[711px]">No changes</span>
  <span class="ml-[11px] w-px h-[22px] bg-[#4a5563]"></span>
  <span class="ml-[9px]">admin</span>
</footer>
<div class="h-[6px] bg-[#0a0f12] flex">
  <span class="ml-[1317px] w-[60px] bg-[#123a44]"></span>
  <span class="ml-[10px] w-[60px] bg-[#4a4c4e]"></span>
</div>
</body>
</html>
